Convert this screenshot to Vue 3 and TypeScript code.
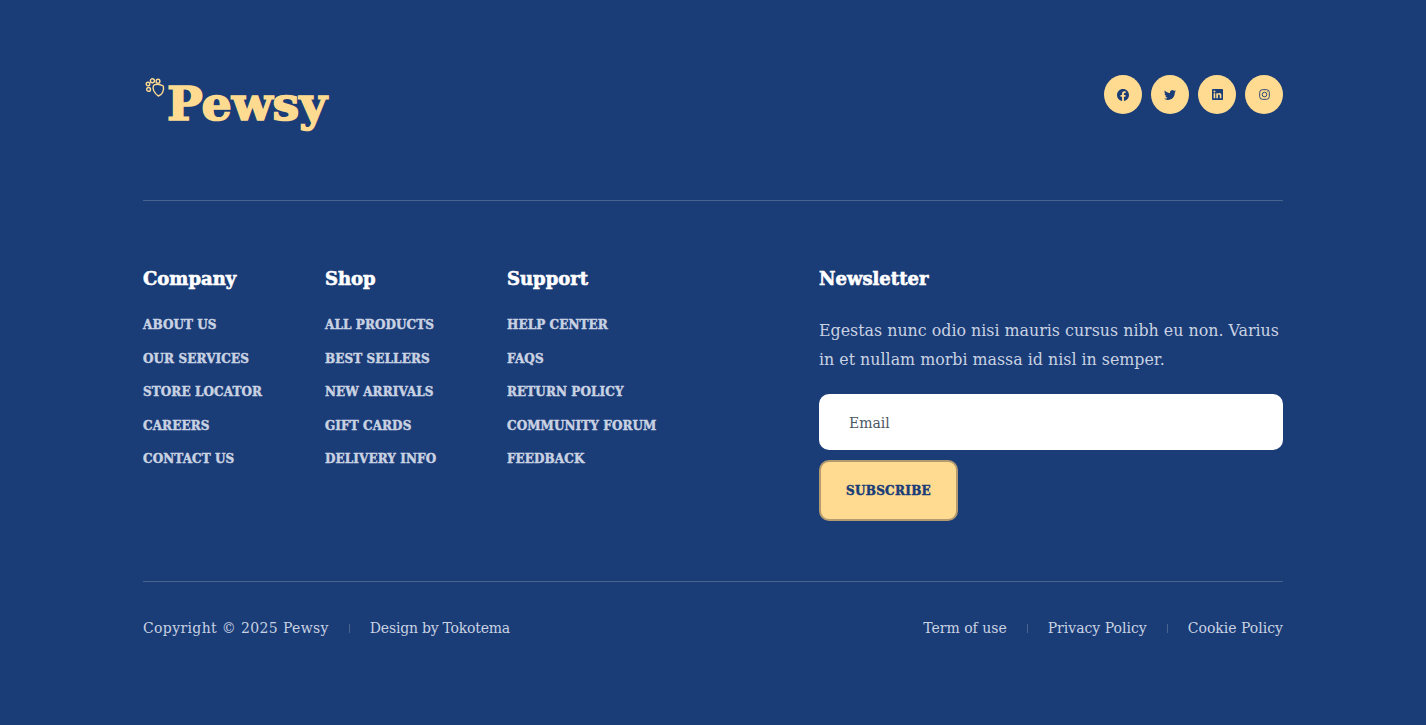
<script setup lang="ts">
const columns = [
  { title: 'Company', links: ['About us', 'Our services', 'Store locator', 'Careers', 'Contact us'] },
  { title: 'Shop', links: ['All products', 'Best sellers', 'New arrivals', 'Gift cards', 'Delivery info'] },
  { title: 'Support', links: ['Help center', 'FAQs', 'Return policy', 'Community forum', 'Feedback'] },
]
const legal = ['Term of use', 'Privacy Policy', 'Cookie Policy']
</script>

<template>
  <footer class="footer">
    <div class="container">
      <div class="top">
        <a class="logo" href="#">
          <svg class="paw" viewBox="0 0 20 20" fill="none" stroke="currentColor" stroke-width="1.4">
            <circle cx="3" cy="6" r="1.800" />
            <circle cx="7.400" cy="2.800" r="2" />
            <circle cx="13" cy="3.200" r="1.900" />
            <circle cx="3.600" cy="11.400" r="1.900" />
            <path d="M8.500 7.500c2.300-1.500 6.500-1.300 9.800.5 1.200 4.200-1.300 9-4.800 10-2.200-1.100-3.600-3-4.600-5-.800-1.800-1.100-4.200-.4-5.500z" stroke-linejoin="round" />
          </svg>
          <span class="logo-text">Pewsy</span>
        </a>
        <div class="socials">
          <a class="social" href="#" aria-label="Facebook">
            <svg viewBox="0 0 24 24" fill="currentColor"><path d="M24 12.07C24 5.400 18.630 0 12 0S0 5.400 0 12.070c0 6.030 4.390 11.020 10.130 11.930v-8.440H7.080v-3.490h3.050V9.410c0-3.020 1.790-4.690 4.530-4.690 1.310 0 2.690.240 2.690.240v2.970h-1.510c-1.490 0-1.960.930-1.960 1.880v2.260h3.330l-.53 3.490h-2.800V24C19.610 23.090 24 18.100 24 12.070z" /></svg>
          </a>
          <a class="social" href="#" aria-label="Twitter">
            <svg viewBox="0 0 24 24" fill="currentColor"><path d="M23.950 4.570a10 10 0 0 1-2.820.770 4.960 4.960 0 0 0 2.160-2.720c-.950.550-2.010.960-3.130 1.190a4.920 4.920 0 0 0-8.380 4.480C7.690 8.100 4.070 6.130 1.640 3.160a4.820 4.820 0 0 0-.660 2.470c0 1.710.870 3.210 2.190 4.100a4.900 4.900 0 0 1-2.230-.620v.060a4.920 4.920 0 0 0 3.950 4.830 5 5 0 0 1-2.210.080 4.940 4.940 0 0 0 4.600 3.420A9.870 9.870 0 0 1 0 19.540a14 14 0 0 0 7.560 2.210c9.050 0 14-7.500 14-13.980 0-.210 0-.420-.020-.630a9.940 9.940 0 0 0 2.410-2.550z" /></svg>
          </a>
          <a class="social" href="#" aria-label="LinkedIn">
            <svg viewBox="0 0 24 24" fill="currentColor"><path d="M20.450 20.450h-3.550v-5.570c0-1.330-.030-3.040-1.850-3.040-1.860 0-2.140 1.450-2.140 2.940v5.670H9.350V9h3.410v1.560h.050c.480-.900 1.640-1.850 3.370-1.850 3.600 0 4.270 2.370 4.270 5.460v6.280zM5.340 7.430a2.060 2.060 0 1 1 0-4.120 2.060 2.060 0 0 1 0 4.120zM7.120 20.450H3.560V9h3.560v11.450zM22.230 0H1.770C.790 0 0 .770 0 1.730v20.540C0 23.230.790 24 1.770 24h20.450c.980 0 1.780-.770 1.780-1.730V1.730C24 .770 23.200 0 22.220 0z" /></svg>
          </a>
          <a class="social" href="#" aria-label="Instagram">
            <svg viewBox="0 0 24 24" fill="none" stroke="currentColor" stroke-width="2"><rect x="1.500" y="1.500" width="21" height="21" rx="6" /><circle cx="12" cy="12" r="5" /><circle cx="18" cy="6" r="1" fill="currentColor" stroke="none" /></svg>
          </a>
        </div>
      </div>

      <div class="middle">
        <div v-for="col in columns" :key="col.title" class="column">
          <h3 class="heading">{{ col.title }}</h3>
          <ul class="links">
            <li v-for="link in col.links" :key="link"><a href="#">{{ link }}</a></li>
          </ul>
        </div>
        <div class="newsletter">
          <h3 class="heading">Newsletter</h3>
          <p class="blurb">Egestas nunc odio nisi mauris cursus nibh eu non. Varius in et nullam morbi massa id nisl in semper.</p>
          <input class="email" type="text" placeholder="Email" />
          <button class="subscribe" type="button">Subscribe</button>
        </div>
      </div>

      <div class="bottom">
        <div class="bottom-group">
          <span class="copyright">Copyright © 2025 Pewsy</span>
          <i class="sep"></i>
          <span class="credit">Design by Tokotema</span>
        </div>
        <div class="bottom-group">
          <template v-for="(item, i) in legal" :key="item">
            <i v-if="i > 0" class="sep"></i>
            <a href="#">{{ item }}</a>
          </template>
        </div>
      </div>
    </div>
  </footer>
</template>

<style>
html, body {
  margin: 0;
  background: #1a3c77;
}
</style>

<style scoped>
.footer {
  background: #1a3c77;
  height: 725px;
  font-family: "DejaVu Serif", serif;
  color: #d1d8e4;
  overflow: hidden;
}
.container {
  width: 1140px;
  margin: 0 auto;
  padding-top: 75px;
}
.top {
  display: flex;
  justify-content: space-between;
  align-items: flex-start;
  height: 125px;
  border-bottom: 1px solid #47638f;
}
.logo {
  display: flex;
  color: #ffdb91;
  text-decoration: none;
}
.paw {
  width: 20px;
  height: 20px;
  margin: 3px 2px 0 2px;
}
.logo-text {
  font-size: 47.5px;
  font-weight: 700;
  line-height: 56px;
  -webkit-text-stroke: 1.7px #ffdb91;
}
.socials {
  display: flex;
  gap: 9px;
}
.social {
  width: 38px;
  height: 39px;
  border-radius: 50%;
  background: #ffdb91;
  color: #1a3c77;
  display: flex;
  align-items: center;
  justify-content: center;
}
.social svg {
  width: 12px;
  height: 12px;
}
.social:nth-child(3) svg,
.social:nth-child(4) svg {
  width: 11px;
  height: 11px;
}
.middle {
  display: grid;
  grid-template-columns: 182px 182px 312px 464px;
  height: 381px;
  padding-top: 66px;
  box-sizing: border-box;
  border-bottom: 1px solid #47638f;
}
.heading {
  margin: 0;
  font-size: 18px;
  line-height: 24px;
  font-weight: 700;
  color: #fff;
  -webkit-text-stroke: 0.6px #fff;
}
.links {
  list-style: none;
  margin: 24px 0 0;
  padding: 0;
  display: flex;
  flex-direction: column;
  gap: 13.5px;
}
.links a {
  display: block;
  line-height: 20px;
  color: #c9d2e2;
  text-decoration: none;
  text-transform: uppercase;
  font-size: 12px;
  font-weight: 700;
  letter-spacing: 0.1px;
  -webkit-text-stroke: 0.45px #c9d2e2;
}
.blurb {
  margin: 25px 0 0;
  font-size: 15.85px;
  line-height: 29px;
  color: #c9d2e2;
}
.email {
  display: block;
  box-sizing: border-box;
  width: 100%;
  height: 56px;
  margin-top: 20px;
  border: 0;
  border-radius: 10px;
  padding: 2px 30px 0;
  background: #fff;
  font-family: inherit;
  font-size: 14px;
}
.email::placeholder {
  color: #4b5563;
  opacity: 1;
}
.subscribe {
  display: block;
  box-sizing: border-box;
  width: 139px;
  height: 61px;
  margin-top: 10px;
  border: 2px solid #b39b6f;
  border-radius: 10px;
  background: #ffdb91;
  color: #1a3c77;
  font-family: inherit;
  font-size: 12px;
  font-weight: 700;
  letter-spacing: 0.3px;
  text-transform: uppercase;
  -webkit-text-stroke: 0.45px #1a3c77;
}
.bottom {
  display: flex;
  justify-content: space-between;
  align-items: center;
  padding-top: 36px;
  font-size: 14px;
  line-height: 20px;
  color: #c9d2e2;
}
.bottom a {
  color: inherit;
  text-decoration: none;
}
.bottom-group {
  display: flex;
  align-items: center;
  gap: 20px;
}
.copyright {
  letter-spacing: 0.36px;
}
.credit {
  letter-spacing: -0.22px;
}
.sep {
  width: 1px;
  height: 9px;
  background: #47638f;
}
</style>
